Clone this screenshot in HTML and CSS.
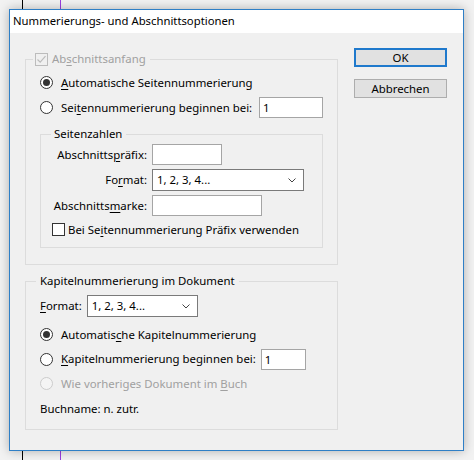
FILE: index.html
```html
<!DOCTYPE html>
<html lang="de">
<head>
<meta charset="utf-8">
<title>Nummerierungs- und Abschnittsoptionen</title>
<link rel="stylesheet" href="styles.css">
</head>
<body>
<div class="desk">
  <div class="line line-black"></div>
  <div class="line line-purple"></div>
  <div class="window">
    <div class="titlebar">Nummerierungs- und Abschnittsoptionen</div>
    <div class="content">
      <div class="main">
        <div class="group g1">
          <div class="group-title gt1"><span class="check disabled checked"><svg viewBox="0 0 13 13" width="13" height="13"><path d="M2.5 6.5 L5.2 9.2 L10.5 3.2" fill="none" stroke="#bcbcbc" stroke-width="1.2"/></svg></span><span class="muted">Ab<u>s</u>chnittsanfang</span></div>
          <div class="row r-first"><span class="radio on"></span><span><u>A</u>utomatische Seitennummerierung</span></div>
          <div class="row r-next"><span class="radio"></span><span>Sei<u>t</u>ennummerierung beginnen bei:</span><span class="input w64 in-a">1</span></div>
          <div class="group g-inner">
            <div class="group-title gt-inner">Seitenzahlen</div>
            <div class="form">
              <span class="lbl">Abschnitts<u>p</u>räfix:</span><span class="input w70"></span>
              <span class="lbl">Fo<u>r</u>mat:</span><span class="select w152"><span>1, 2, 3, 4...</span><svg viewBox="0 0 8 5" width="8" height="5"><path d="M0.5 0.5 L4 4 L7.5 0.5" fill="none" stroke="#444" stroke-width="1"/></svg></span>
              <span class="lbl">Abschnitts<u>m</u>arke:</span><span class="input w110"></span>
            </div>
            <div class="row check-row"><span class="check"></span><span>Bei Se<u>i</u>tennummerierung Präfix verwenden</span></div>
          </div>
        </div>
        <div class="group g2">
          <div class="group-title gt2">Kapitelnummerierung im Dokument</div>
          <div class="row format-row"><span class="lbl2"><u>F</u>ormat:</span><span class="select w111"><span>1, 2, 3, 4...</span><svg viewBox="0 0 8 5" width="8" height="5"><path d="M0.5 0.5 L4 4 L7.5 0.5" fill="none" stroke="#444" stroke-width="1"/></svg></span></div>
          <div class="row r-k1"><span class="radio on"></span><span>Automatis<u>c</u>he Kapitelnummerierung</span></div>
          <div class="row r-k2"><span class="radio"></span><span><u>K</u>apitelnummerierung beginnen bei:</span><span class="input w45 in-b">1</span></div>
          <div class="row r-k3"><span class="radio disabled"></span><span class="muted">Wie vorheriges Dokument im <u>B</u>uch</span></div>
          <div class="row r-k4"><span>Buchname: n. zutr.</span></div>
        </div>
      </div>
      <div class="side">
        <div class="btn default">OK</div>
        <div class="btn">Abbrechen</div>
      </div>
    </div>
  </div>
</div>
</body>
</html>
```
FILE: styles.css
```css
* { box-sizing: border-box; }
html, body { margin: 0; padding: 0; }
body {
  background: #f2f2f2;
  font-family: "Noto Sans", "Open Sans", sans-serif;
  font-size: 11.4px;
  line-height: 16px;
  color: #000;
  width: 474px;
  height: 460px;
  overflow: hidden;
  white-space: nowrap;
}
.desk { position: relative; width: 474px; height: 460px; padding: 9px 0 0 9px; }
.line { position: absolute; top: 0; bottom: 0; width: 1px; }
.line-black { left: 22px; background: #000; }
.line-purple { left: 60px; background: #9a3ee0; }
.window {
  position: relative;
  width: 455px;
  height: 442px;
  border: 1px solid #2f7fc6;
  background: #f0f0f0;
  box-shadow: 0 0 10px rgba(0,0,0,0.28);
  display: flex;
  flex-direction: column;
}
.titlebar {
  height: 23px;
  background: #fff;
  padding: 3px 0 0 3px;
  font-size: 11.3px;
  line-height: 16px;
}
.content {
  flex: 1;
  display: flex;
  padding: 15px 15px 0 15px;
  gap: 16px;
}
.main { width: 313px; margin-top: 11px; display: flex; flex-direction: column; }
.side { width: 93px; display: flex; flex-direction: column; }
.group {
  border: 1px solid #dcdcdc;
  display: flex;
  flex-direction: column;
}
.group-title {
  align-self: flex-start;
  background: #f0f0f0;
  margin-top: -9px;
  height: 16px;
  display: flex;
  align-items: center;
  gap: 4px;
}
.g1 { padding: 0 14px 16px 14px; }
.gt1 { margin-left: -7px; padding: 0 4px 0 2px; }
.g-inner { margin-top: 16px; padding: 0 0 7px 11px; }
.gt-inner { margin-left: -1px; padding: 0 4px 0 3px; }
.g2 { margin-top: 16px; padding: 0 14px 10px 14px; }
.gt2 { margin-left: -4px; padding: 0 4px 0 4px; }
.muted { color: #a0a0a0; }
.row { display: flex; align-items: center; height: 21px; }
.r-first { margin-top: 5px; }
.r-next { margin-top: 4px; }
.radio {
  width: 13px; height: 13px;
  border: 1px solid #333;
  border-radius: 50%;
  background: #fff;
  margin-right: 8px;
  display: flex; align-items: center; justify-content: center;
  flex: none;
}
.radio.on::after {
  content: "";
  width: 7px; height: 7px; border-radius: 50%;
  background: #333;
}
.radio.disabled { border-color: #cccccc; background: #f4f4f4; }
.check {
  width: 13px; height: 13px;
  border: 1px solid #333;
  background: #fff;
  flex: none;
  display: block;
}
.check.disabled { border-color: #bcbcbc; background: #f0f0f0; position: relative; }
.check.disabled svg { position: absolute; left: -1px; top: -1px; }
.input {
  height: 21px;
  background: #fff;
  border: 1px solid #a5a5a5;
  padding-left: 3px;
  line-height: 19px;
  display: block;
  flex: none;
}
.row .input { margin-left: 4px; }
.row .in-a { margin-left: auto; }
.row .in-b { margin-left: 5px; }
.w64 { width: 64px; }
.w70 { width: 70px; }
.w110 { width: 110px; }
.w45 { width: 45px; }
.select {
  height: 22px;
  background: #fff;
  border: 1px solid #7a7a7a;
  padding: 0 7px 0 4px;
  display: flex;
  align-items: center;
  justify-content: space-between;
  flex: none;
}
.w152 { width: 152px; }
.w111 { width: 111px; }
.form {
  margin-top: 2px;
  display: grid;
  grid-template-columns: 95px auto;
  column-gap: 5px;
  row-gap: 4px;
  justify-items: start;
  align-items: center;
}
.lbl { justify-self: end; }
.check-row { margin-top: 3px; }
.check-row .check { margin-right: 3px; }
.format-row { margin-top: 6px; height: 22px; }
.lbl2 { margin-right: 5px; }
.r-k1 { margin-top: 7px; }
.r-k2 { margin-top: 3px; height: 22px; }
.r-k3 { margin-top: 3px; }
.r-k4 { margin-top: 4px; }
.btn {
  height: 19px;
  border: 1px solid #adadad;
  background: #e1e1e1;
  text-align: center;
  line-height: 17px;
}
.btn.default { border: 2px solid #1f79cc; line-height: 15px; }
.btn + .btn { margin-top: 12px; }
u { text-decoration: underline; text-underline-offset: 2px; }
```
